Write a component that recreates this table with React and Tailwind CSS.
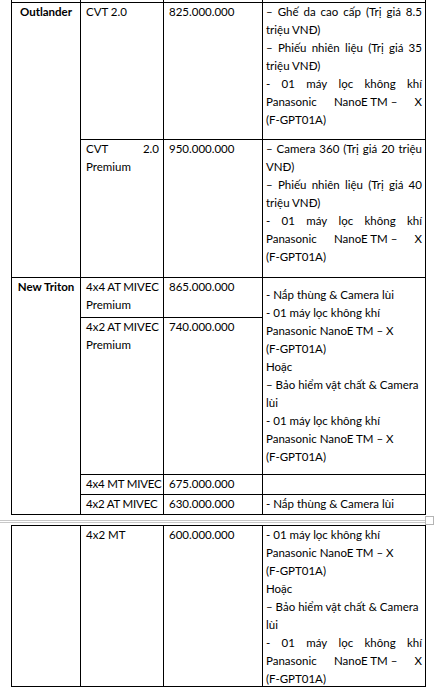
import React from "react";

const NB = "\u00a0";

function Line({ j, children }) {
  if (j) {
    const words = children.split(" ");
    return (
      <div className="flex justify-between whitespace-pre">
        {words.map((w, i) => (
          <span key={i}>{w}</span>
        ))}
      </div>
    );
  }
  return <div className="whitespace-pre">{children}</div>;
}

const PANA = `Panasonic NanoE${NB}TM${NB}– X`;

export default function App() {
  const cell = "border-r border-b border-black";
  const c2 = `${cell} pl-[5px] pr-[4px] whitespace-nowrap`;
  const c4 = `${cell} pl-[3px] pr-[3px]`;
  return (
    <div className="w-[435px] h-[693px] overflow-hidden bg-white text-black font-['Lato',sans-serif] text-[11.5px] leading-[18px]">
      <div className="ml-[11px] w-[415px] grid grid-cols-[69px_83px_99px_163px] grid-rows-[3px_137px_138px_40px_157px_20px_20px] border-l border-black">
        <div className={`${cell} col-start-1 row-start-1`} />
        <div className={`${cell} col-start-2 row-start-1`} />
        <div className={`${cell} col-start-3 row-start-1`} />
        <div className={`${cell} col-start-4 row-start-1`} />

        <div className={`${cell} col-start-1 row-start-2 row-span-2 text-center font-bold`}>Outlander</div>
        <div className={`${c2} col-start-2 row-start-2`}>CVT 2.0</div>
        <div className={`${c2} col-start-3 row-start-2`}>825.000.000</div>
        <div className={`${c4} col-start-4 row-start-2`}>
          <Line j>– Ghế da cao cấp (Trị giá 8.5</Line>
          <Line>triệu VNĐ)</Line>
          <Line j>– Phiếu nhiên liệu (Trị giá 35</Line>
          <Line>triệu VNĐ)</Line>
          <Line j>- 01 máy lọc không khí</Line>
          <Line j>{PANA}</Line>
          <Line>(F-GPT01A)</Line>
        </div>

        <div className={`${c2} col-start-2 row-start-3`}>
          <Line j>CVT 2.0</Line>
          <Line>Premium</Line>
        </div>
        <div className={`${c2} col-start-3 row-start-3`}>950.000.000</div>
        <div className={`${c4} col-start-4 row-start-3`}>
          <Line j>– Camera 360 (Trị giá 20 triệu</Line>
          <Line>VNĐ)</Line>
          <Line j>– Phiếu nhiên liệu (Trị giá 40</Line>
          <Line>triệu VNĐ)</Line>
          <Line j>- 01 máy lọc không khí</Line>
          <Line j>{PANA}</Line>
          <Line>(F-GPT01A)</Line>
        </div>

        <div className={`${cell} col-start-1 row-start-4 row-span-4 text-center font-bold`}>New Triton</div>
        <div className={`${c2} col-start-2 row-start-4`}>
          <Line j>4x4 AT MIVEC</Line>
          <Line>Premium</Line>
        </div>
        <div className={`${c2} col-start-3 row-start-4`}>865.000.000</div>
        <div className={`${c4} col-start-4 row-start-4 row-span-2 flex flex-col justify-center`}>
          <Line>- Nắp thùng &amp; Camera lùi</Line>
          <Line>- 01 máy lọc không khí</Line>
          <Line>Panasonic NanoE TM – X</Line>
          <Line>(F-GPT01A)</Line>
          <Line>Hoặc</Line>
          <Line>– Bảo hiểm vật chất &amp; Camera</Line>
          <Line>lùi</Line>
          <Line>- 01 máy lọc không khí</Line>
          <Line>Panasonic NanoE TM – X</Line>
          <Line>(F-GPT01A)</Line>
        </div>

        <div className={`${c2} col-start-2 row-start-5`}>
          <Line j>4x2 AT MIVEC</Line>
          <Line>Premium</Line>
        </div>
        <div className={`${c2} col-start-3 row-start-5`}>740.000.000</div>

        <div className={`${c2} col-start-2 row-start-6 tracking-[-0.2px]`}>4x4 MT MIVEC</div>
        <div className={`${c2} col-start-3 row-start-6`}>675.000.000</div>
        <div className={`${c4} col-start-4 row-start-6`} />

        <div className={`${c2} col-start-2 row-start-7 tracking-[-0.2px]`}>4x2 AT MIVEC</div>
        <div className={`${c2} col-start-3 row-start-7`}>630.000.000</div>
        <div className={`${c4} col-start-4 row-start-7`}>- Nắp thùng &amp; Camera lùi</div>
      </div>

      <div className="h-[10px] flex items-start">
        <div className="flex-1 mt-[5px] h-[3px] border-y border-[#c8c8c8]" />
        <div className="mt-[1px] mr-[1px] w-[9px] h-[9px] border border-[#b4b4b4] bg-white" />
      </div>

      <div className="ml-[11px] w-[415px] grid grid-cols-[69px_83px_99px_163px] grid-rows-[161px] border-l border-t border-black">
        <div className={`${cell}`} />
        <div className={`${c2}`}>4x2 MT</div>
        <div className={`${c2}`}>600.000.000</div>
        <div className={`${c4}`}>
          <Line>- 01 máy lọc không khí</Line>
          <Line>Panasonic NanoE TM – X</Line>
          <Line>(F-GPT01A)</Line>
          <Line>Hoặc</Line>
          <Line>– Bảo hiểm vật chất &amp; Camera</Line>
          <Line>lùi</Line>
          <Line j>- 01 máy lọc không khí</Line>
          <Line j>{PANA}</Line>
          <Line>(F-GPT01A)</Line>
        </div>
      </div>
    </div>
  );
}
